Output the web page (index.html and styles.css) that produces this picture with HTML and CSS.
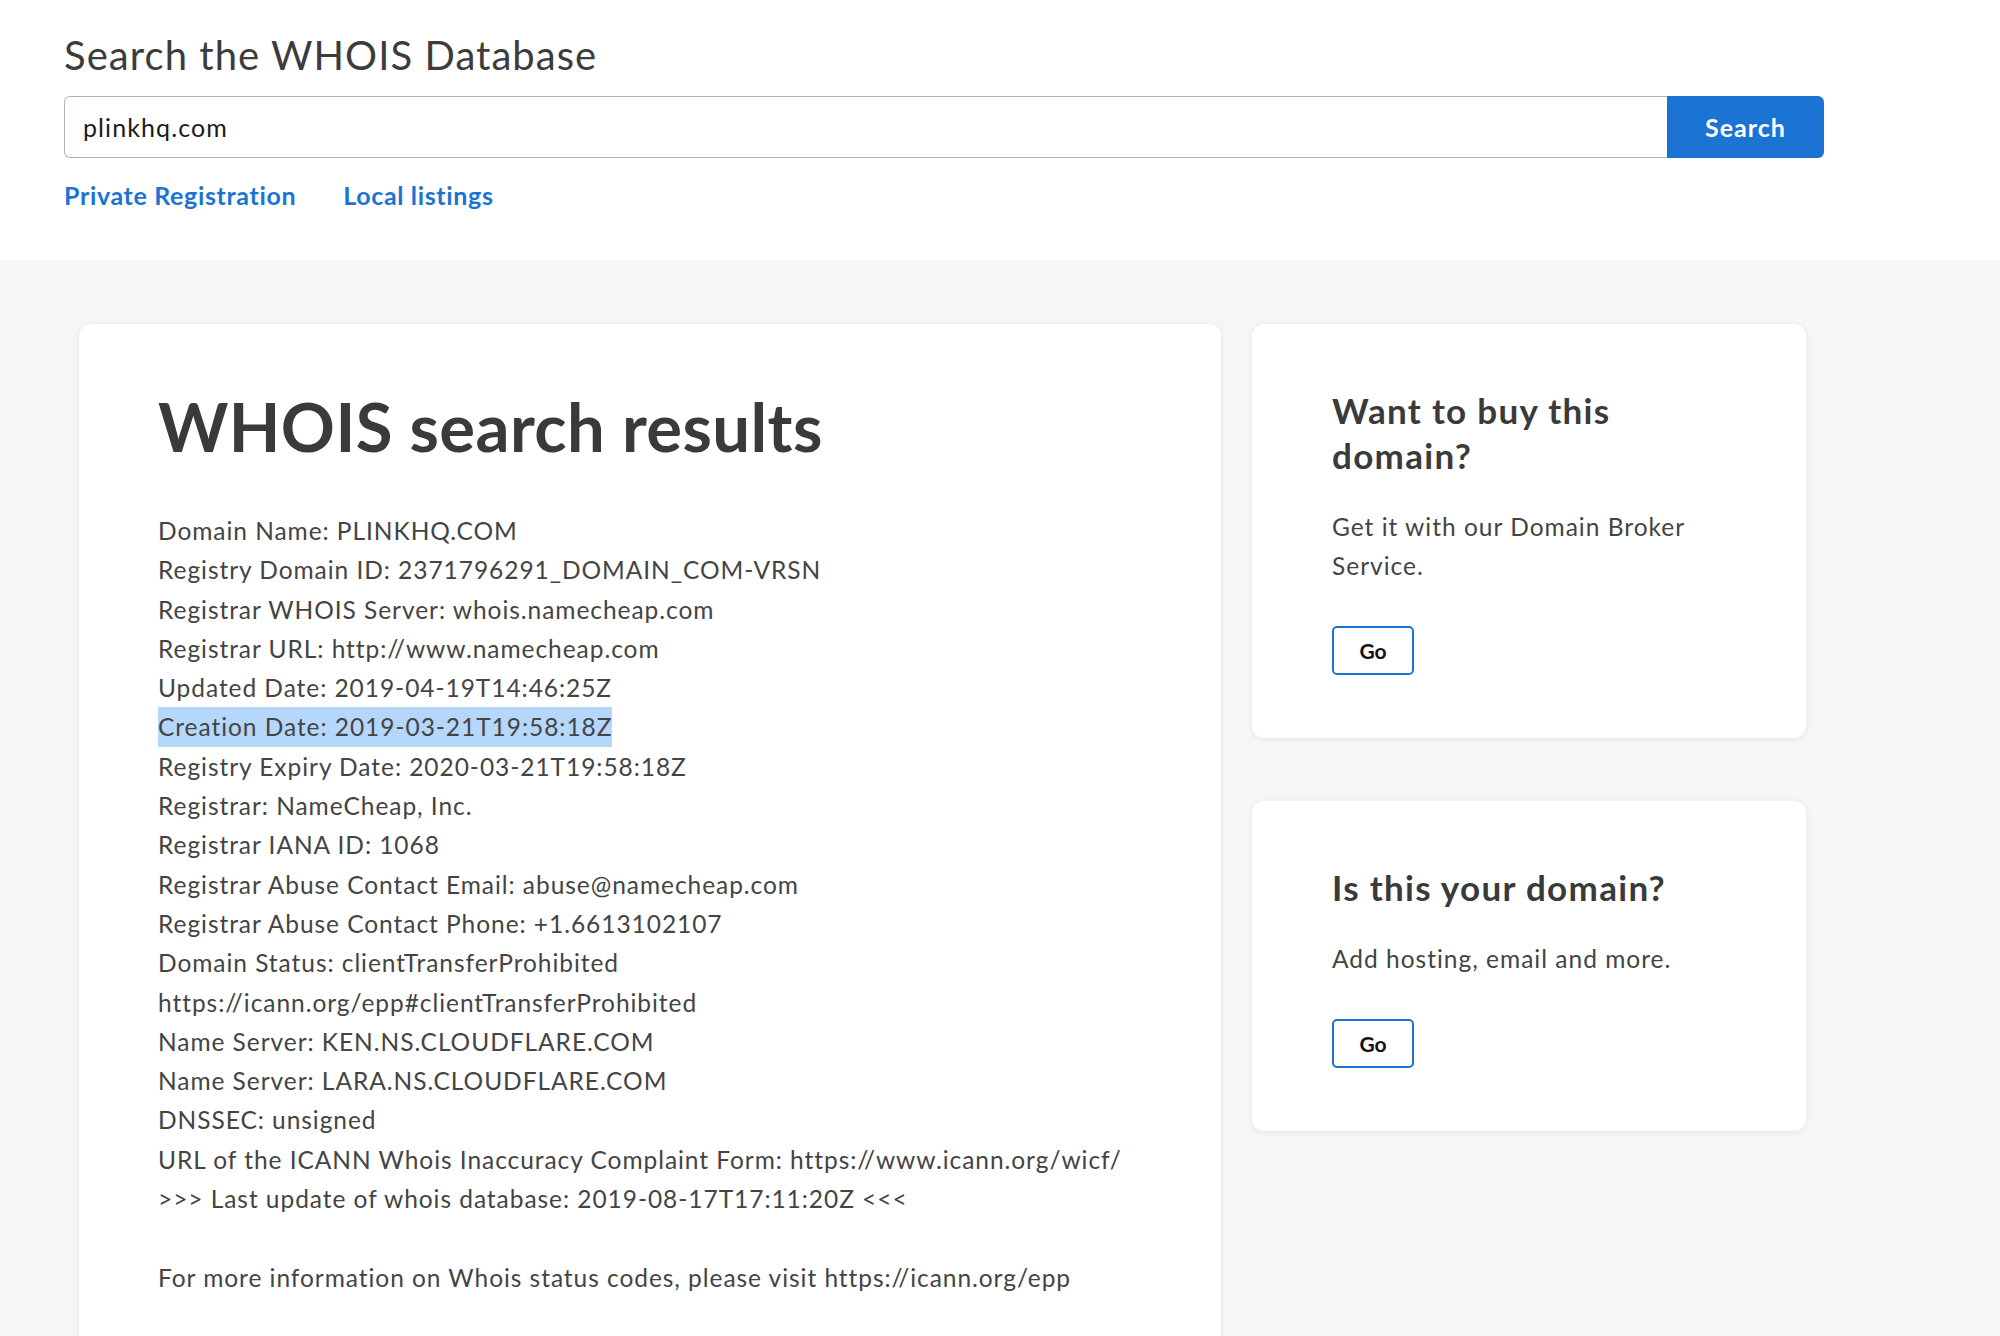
FILE: index.html
```html
<!DOCTYPE html>
<html lang="en">
<head>
<meta charset="utf-8">
<title>WHOIS Search</title>
<link rel="stylesheet" href="styles.css">
</head>
<body>
<header class="top">
  <div class="top-inner">
    <h1 class="page-title">Search the WHOIS Database</h1>
    <form class="search-form">
      <input class="search-input" type="text" value="plinkhq.com">
      <button class="search-btn" type="button">Search</button>
    </form>
    <nav class="top-links">
      <a class="top-link" href="#">Private Registration</a>
      <a class="top-link" href="#">Local listings</a>
    </nav>
  </div>
</header>
<main class="content">
  <div class="layout">
    <section class="card main-card">
      <h2 class="results-title">WHOIS search results</h2>
      <div class="whois">
        <div class="line">Domain Name: PLINKHQ.COM</div>
        <div class="line">Registry Domain ID: 2371796291_DOMAIN_COM-VRSN</div>
        <div class="line">Registrar WHOIS Server: whois.namecheap.com</div>
        <div class="line">Registrar URL: http://www.namecheap.com</div>
        <div class="line">Updated Date: 2019-04-19T14:46:25Z</div>
        <div class="line"><span class="hl">Creation Date: 2019-03-21T19:58:18Z</span></div>
        <div class="line">Registry Expiry Date: 2020-03-21T19:58:18Z</div>
        <div class="line">Registrar: NameCheap, Inc.</div>
        <div class="line">Registrar IANA ID: 1068</div>
        <div class="line">Registrar Abuse Contact Email: abuse@namecheap.com</div>
        <div class="line">Registrar Abuse Contact Phone: +1.6613102107</div>
        <div class="line">Domain Status: clientTransferProhibited</div>
        <div class="line">https://icann.org/epp#clientTransferProhibited</div>
        <div class="line">Name Server: KEN.NS.CLOUDFLARE.COM</div>
        <div class="line">Name Server: LARA.NS.CLOUDFLARE.COM</div>
        <div class="line">DNSSEC: unsigned</div>
        <div class="line">URL of the ICANN Whois Inaccuracy Complaint Form: https://www.icann.org/wicf/</div>
        <div class="line">&gt;&gt;&gt; Last update of whois database: 2019-08-17T17:11:20Z &lt;&lt;&lt;</div>
        <div class="line blank">&nbsp;</div>
        <div class="line">For more information on Whois status codes, please visit https://icann.org/epp</div>
      </div>
    </section>
    <aside class="side">
      <section class="card side-card">
        <h3 class="side-title">Want to buy this domain?</h3>
        <p class="side-text">Get it with our Domain Broker Service.</p>
        <button class="go-btn" type="button">Go</button>
      </section>
      <section class="card side-card">
        <h3 class="side-title">Is this your domain?</h3>
        <p class="side-text">Add hosting, email and more.</p>
        <button class="go-btn" type="button">Go</button>
      </section>
    </aside>
  </div>
</main>
</body>
</html>
```

FILE: styles.css
```css
* { box-sizing: border-box; }
html, body {
  margin: 0;
  padding: 0;
}
body {
  font-family: Lato, "Noto Sans", sans-serif;
  color: #444;
  background: #f5f6f7;
  height: 1336px;
  overflow: hidden;
}
.top {
  background: #fff;
  padding: 31px 0 50px 64px;
}
.top-inner {
  width: 1760px;
}
.page-title {
  margin: 0;
  font-size: 40px;
  line-height: 48px;
  font-weight: 400;
  letter-spacing: 1.05px;
  color: #3c3c3c;
}
.search-form {
  display: flex;
  margin-top: 17px;
  height: 62px;
}
.search-input {
  flex: 1;
  height: 62px;
  border: 1px solid #a9b6c1;
  border-right: none;
  border-radius: 6px 0 0 6px;
  padding: 0 18px;
  font-family: Lato, "Noto Sans", sans-serif;
  font-size: 25px;
  letter-spacing: 1.1px;
  color: #1b1b1b;
  outline: none;
}
.search-btn {
  width: 157px;
  height: 62px;
  border: none;
  border-radius: 0 6px 6px 0;
  background: #1b74d3;
  color: #fff;
  font-family: Lato, "Noto Sans", sans-serif;
  font-size: 25px;
  font-weight: 700;
  letter-spacing: 1px;
}
.top-links {
  display: flex;
  gap: 47px;
  margin-top: 22px;
}
.top-link {
  font-size: 25px;
  line-height: 30px;
  font-weight: 700;
  letter-spacing: 0.65px;
  color: #1b74d3;
  text-decoration: none;
}
.content {
  padding: 64px 0 0 79px;
}
.layout {
  display: grid;
  grid-template-columns: 1142px 554px;
  column-gap: 31px;
  align-items: start;
}
.card {
  background: #fff;
  border-radius: 12px;
  box-shadow: 0 1px 6px rgba(0, 0, 0, 0.08);
}
.main-card {
  padding: 62px 79px 60px;
  min-height: 1040px;
}
.results-title {
  margin: 0;
  font-size: 67px;
  line-height: 80px;
  font-weight: 700;
  letter-spacing: 0.4px;
  color: #3a3a3a;
}
.whois {
  margin-top: 45px;
  font-size: 24.5px;
  line-height: 39.3px;
  letter-spacing: 0.95px;
  color: #444;
}
.hl {
  display: inline-block;
  background: #b4d7fb;
}
.side {
  display: flex;
  flex-direction: column;
  gap: 63px;
}
.side-card {
  padding: 64px 80px 63px;
}
.side-title {
  margin: 0;
  font-size: 35px;
  line-height: 45px;
  font-weight: 700;
  letter-spacing: 1.3px;
  color: #3a3a3a;
  max-width: 360px;
}
.side-text {
  margin: 29px 0 41px;
  font-size: 24.5px;
  line-height: 39px;
  letter-spacing: 1px;
  max-width: 370px;
}
.go-btn {
  width: 82px;
  height: 49px;
  border: 2px solid #1b74d3;
  border-radius: 5px;
  background: #fff;
  font-family: Lato, "Noto Sans", sans-serif;
  font-size: 21px;
  font-weight: 700;
  color: #111;
  padding: 0;
}
```
